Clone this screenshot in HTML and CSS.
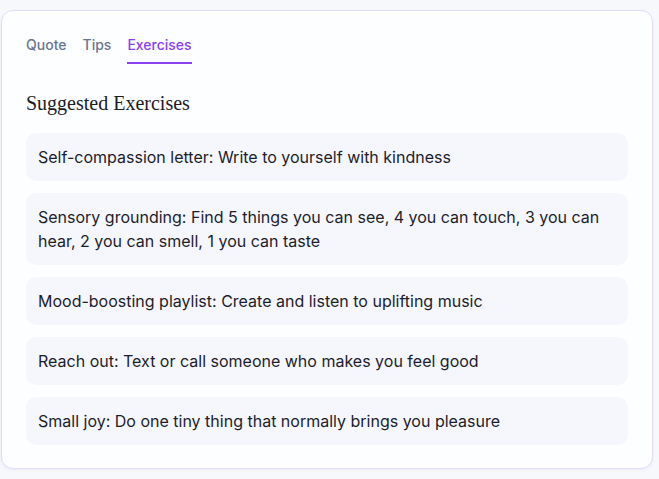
FILE: index.html
```html
<!DOCTYPE html>
<html lang="en">
<head>
<meta charset="utf-8">
<link rel="stylesheet" href="styles.css">
</head>
<body>
<div class="page">
  <section class="card">
    <nav class="tabs">
      <button class="tab">Quote</button>
      <button class="tab">Tips</button>
      <button class="tab active">Exercises</button>
    </nav>
    <h2 class="title">Suggested Exercises</h2>
    <ul class="list">
      <li class="item">Self-compassion letter: Write to yourself with kindness</li>
      <li class="item">Sensory grounding: Find 5 things you can see, 4 you can touch, 3 you can hear, 2 you can smell, 1 you can taste</li>
      <li class="item">Mood-boosting playlist: Create and listen to uplifting music</li>
      <li class="item">Reach out: Text or call someone who makes you feel good</li>
      <li class="item">Small joy: Do one tiny thing that normally brings you pleasure</li>
    </ul>
  </section>
</div>
</body>
</html>
```
FILE: styles.css
```css
* { box-sizing: border-box; }
html, body { margin: 0; padding: 0; }
body {
  background: #f7f8fc;
  font-family: Inter, "Noto Sans", sans-serif;
  width: 659px;
  height: 479px;
  overflow: hidden;
}
.page {
  padding: 10px 6px 0 1px;
}
.card {
  width: 652px;
  background: #fdfeff;
  border: 1px solid #e6dafb;
  border-radius: 12px;
  padding: 24px 24px 23px 24px;
  box-shadow: 0 1px 3px rgba(120, 100, 160, 0.08);
}
.tabs {
  display: flex;
  gap: 16px;
}
.tab {
  background: none;
  border: none;
  padding: 0 0 7px 0;
  margin: 0;
  font-family: inherit;
  font-size: 14px;
  line-height: 20px;
  font-weight: 500;
  color: #6b7591;
  border-bottom: 2px solid transparent;
  cursor: pointer;
}
.tab.active {
  color: #8b3ff0;
  border-bottom-color: #8b3ff0;
}
.title {
  margin: 25px 0 16px 0;
  font-family: "Liberation Serif", "DejaVu Serif", serif;
  font-weight: 400;
  font-size: 20px;
  line-height: 28px;
  color: #1c1b26;
}
.list {
  list-style: none;
  margin: 0;
  padding: 0;
  display: flex;
  flex-direction: column;
  gap: 12px;
}
.item {
  background: #f5f7fd;
  border-radius: 10px;
  padding: 12px 12px;
  font-size: 16px;
  line-height: 24px;
  color: #1d1d2b;
}
```
